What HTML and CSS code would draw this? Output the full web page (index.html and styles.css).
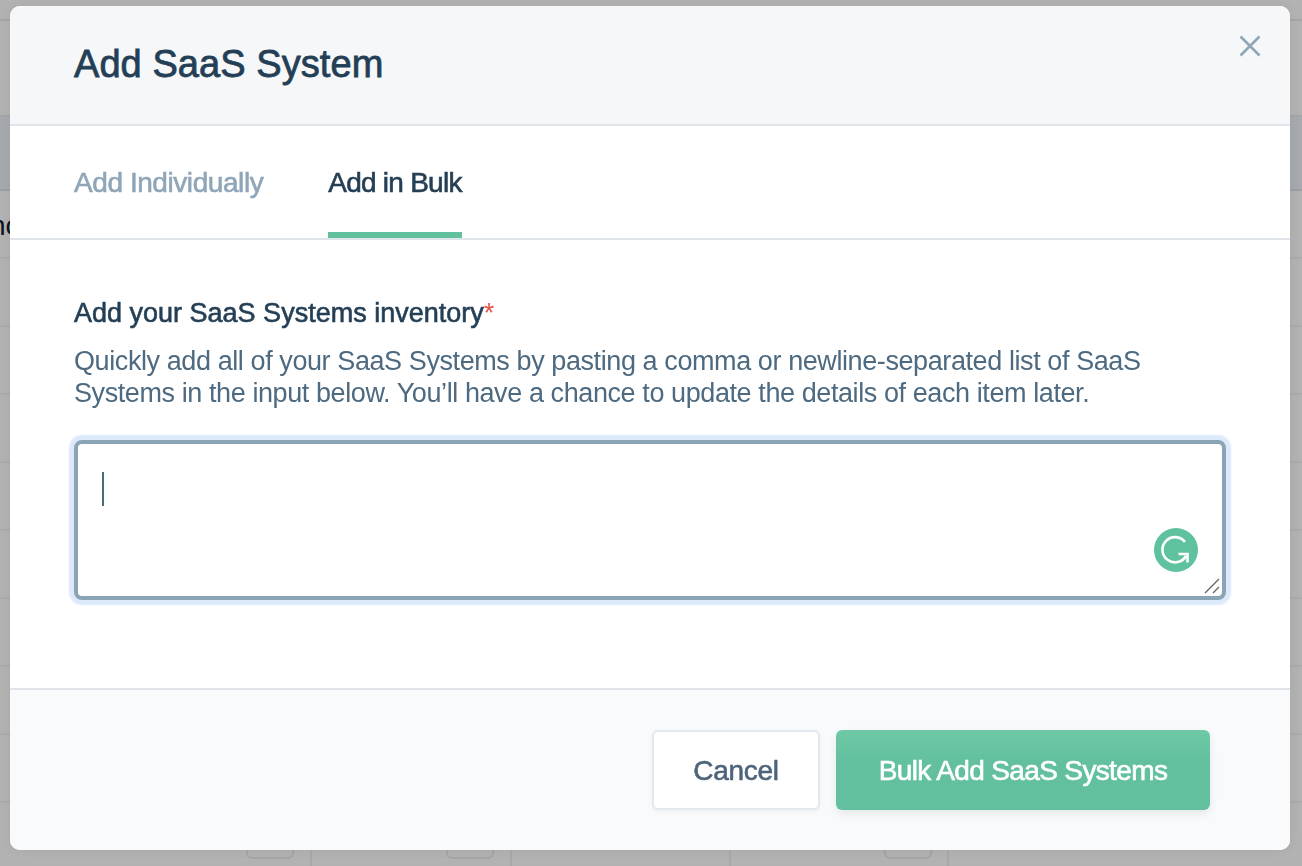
FILE: index.html
```html
<!DOCTYPE html>
<html lang="en">
<head>
    <meta charset="UTF-8">
    <meta name="viewport" content="width=device-width, initial-scale=1.0">
    <title>Add SaaS System</title>
    <link rel="stylesheet" href="styles.css">
</head>
<body>
    <!-- page behind the dialog -->
    <div class="page">
        <div class="top-row"></div>
        <div class="nav-row"></div>
        <div class="table-head"></div>
        <div class="row row-label"><span class="row-text">nc</span></div>
        <div class="row"></div>
        <div class="row"></div>
        <div class="row"></div>
        <div class="row"></div>
        <div class="row"></div>
        <div class="row"></div>
        <div class="row"></div>
        <div class="row"></div>
        <div class="last-row">
            <div class="cell cell-a"><span class="cell-btn"></span></div>
            <div class="cell cell-b"><span class="cell-btn"></span></div>
            <div class="cell cell-c"></div>
            <div class="cell cell-d"><span class="cell-btn"></span></div>
        </div>
    </div>
    <div class="backdrop"></div>

    <div class="modal">
        <div class="modal-header">
            <h1 class="modal-title">Add SaaS System</h1>
            <button class="close-btn" aria-label="Close">
                <svg width="22" height="22" viewBox="0 0 22 22" fill="none" stroke="#8fa6b6" stroke-width="2.6">
                    <path d="M1.5 1.5 20.5 20.5M20.5 1.5 1.5 20.5"/>
                </svg>
            </button>
        </div>

        <div class="tabs">
            <div class="tab">Add Individually</div>
            <div class="tab active">Add in Bulk</div>
        </div>

        <div class="modal-body">
            <div class="field-label">Add your SaaS Systems inventory<span class="required">*</span></div>
            <p class="field-help">Quickly add all of your SaaS Systems by pasting a comma or newline-separated list of SaaS Systems in the input below. You’ll have a chance to update the details of each item later.</p>
            <div class="input-box">
                <span class="caret"></span>
                <span class="grammarly">
                    <svg width="44" height="44" viewBox="0 0 44 44" fill="none" stroke="#fff" stroke-width="2.6">
                        <circle cx="22" cy="22" r="22" fill="#5fc29e" stroke="none"/>
                        <path d="M31 14A12.6 12.6 0 1 0 32 28"/>
                        <path d="M24.5 26H33.5V34.5"/>
                    </svg>
                </span>
                <svg class="grip" width="16" height="16" viewBox="0 0 16 16" fill="none" stroke="#666" stroke-width="1.4">
                    <path d="M1 15 15 1M9 15 15 9"/>
                </svg>
            </div>
        </div>

        <div class="modal-footer">
            <button class="btn btn-cancel">Cancel</button>
            <button class="btn btn-primary">Bulk Add SaaS Systems</button>
        </div>
    </div>
</body>
</html>
```

FILE: styles.css
```css
/* page behind the dialog */
html, body {
    height: 100%;
}
body {
    margin: 0;
    overflow: hidden;
    background-color: #fff;
    font-family: "Liberation Sans", Arial, sans-serif;
}
.page {
    height: 866px;
    overflow: hidden;
}
.top-row {
    height: 19px;
    border-bottom: 2px solid #eee;
}
.nav-row {
    height: 94px;
    border-bottom: 2px solid #ececec;
}
.table-head {
    height: 72px;
    background-color: #eef4f9;
    border-bottom: 2px solid #dfe5ea;
}
.row {
    height: 66px;
    border-bottom: 2px solid #f4f4f4;
}
.row-label {
    display: flex;
    align-items: center;
}
.row-text {
    margin: 4px 0 0 -10px;
    font-size: 28px;
    color: #10202e;
}
.last-row {
    display: flex;
    height: 66px;
}
.cell {
    display: flex;
    box-sizing: border-box;
    justify-content: flex-end;
    align-items: flex-end;
    padding-bottom: 10px;
    border-right: 2px solid #f0f0f0;
}
.cell-a {
    width: 312px;
    padding-right: 16px;
}
.cell-b {
    width: 200px;
    padding-right: 16px;
}
.cell-c {
    width: 219px;
}
.cell-d {
    width: 218px;
    padding-right: 15px;
}
.cell-btn {
    display: block;
    box-sizing: border-box;
    width: 48px;
    height: 48px;
    border: 2px solid #ececec;
    border-radius: 6px;
}
.backdrop {
    position: fixed;
    inset: 0;
    background-color: rgba(0, 0, 0, 0.3);
}

/* dialog */
.modal {
    position: fixed;
    left: 10px;
    top: 6px;
    width: 1280px;
    height: 844px;
    display: flex;
    flex-direction: column;
    box-sizing: border-box;
    background-color: #fff;
    border-radius: 10px;
    overflow: hidden;
    box-shadow: 0 0 14px rgba(0, 0, 0, 0.07);
}
.modal-header {
    display: flex;
    justify-content: space-between;
    height: 118px;
    padding: 0 29px 0 64px;
    background-color: #f5f7f9;
    border-bottom: 2px solid #dfe5eb;
}
.modal-title {
    margin: 32px 0 0;
    font-size: 38px;
    line-height: 52px;
    font-weight: 400;
    letter-spacing: 0.07px;
    color: #243f55;
    -webkit-text-stroke: 0.8px #243f55;
}
.close-btn {
    align-self: flex-start;
    margin-top: 29px;
    padding: 0;
    border: 0;
    background: none;
    line-height: 0;
}
.tabs {
    display: flex;
    gap: 65px;
    height: 112px;
    padding-left: 64px;
    border-bottom: 2px solid #dfe5eb;
}
.tab {
    box-sizing: border-box;
    height: 112px;
    padding-top: 39px;
    font-size: 28px;
    line-height: 36px;
    letter-spacing: -0.43px;
    color: #8fa6b8;
    -webkit-text-stroke: 0.6px #8fa6b8;
}
.tab.active {
    color: #243f55;
    letter-spacing: -0.75px;
    border-bottom: 6px solid #62c09e;
    -webkit-text-stroke: 0.6px #243f55;
}
.modal-body {
    flex: 1;
    padding: 57px 64px 0;
}
.field-label {
    font-size: 27px;
    line-height: 32px;
    color: #243f55;
    -webkit-text-stroke: 0.6px #243f55;
}
.required {
    color: #e5534b;
    -webkit-text-stroke: 0;
}
.field-help {
    margin: 16px 0 0;
    font-size: 27px;
    line-height: 32px;
    letter-spacing: -0.41px;
    color: #4d6a80;
}
.input-box {
    position: relative;
    box-sizing: border-box;
    width: 1152px;
    height: 160px;
    margin-top: 31px;
    background-color: #fff;
    border: 4px solid #8aa3b5;
    border-radius: 8px;
    box-shadow: 0 0 2px 5px #dce8fb;
}
.caret {
    position: absolute;
    left: 24px;
    top: 28px;
    width: 2px;
    height: 34px;
    background-color: #4a6a80;
}
.grammarly {
    position: absolute;
    right: 24px;
    bottom: 24px;
    line-height: 0;
}
.grip {
    position: absolute;
    right: 2px;
    bottom: 2px;
}
.modal-footer {
    display: flex;
    justify-content: flex-end;
    gap: 16px;
    height: 162px;
    box-sizing: border-box;
    padding: 40px 80px 0 0;
    background-color: #f9fafc;
    border-top: 2px solid #dfe5eb;
}
.btn {
    height: 80px;
    padding-top: 3px;
    font-family: inherit;
    font-size: 28px;
    border-radius: 6px;
}
.btn-cancel {
    width: 168px;
    color: #4d6479;
    letter-spacing: -0.3px;
    background-color: #fff;
    border: 2px solid #e2e8f0;
    box-shadow: 0 2px 6px rgba(0, 0, 0, 0.04);
    -webkit-text-stroke: 0.6px #4d6479;
}
.btn-primary {
    width: 374px;
    color: #fff;
    letter-spacing: -0.64px;
    background: linear-gradient(#6fc8a6, #62c09e 40%);
    border: 0;
    box-shadow: 0 4px 10px rgba(0, 0, 0, 0.08);
    -webkit-text-stroke: 0.6px #fff;
}
```
